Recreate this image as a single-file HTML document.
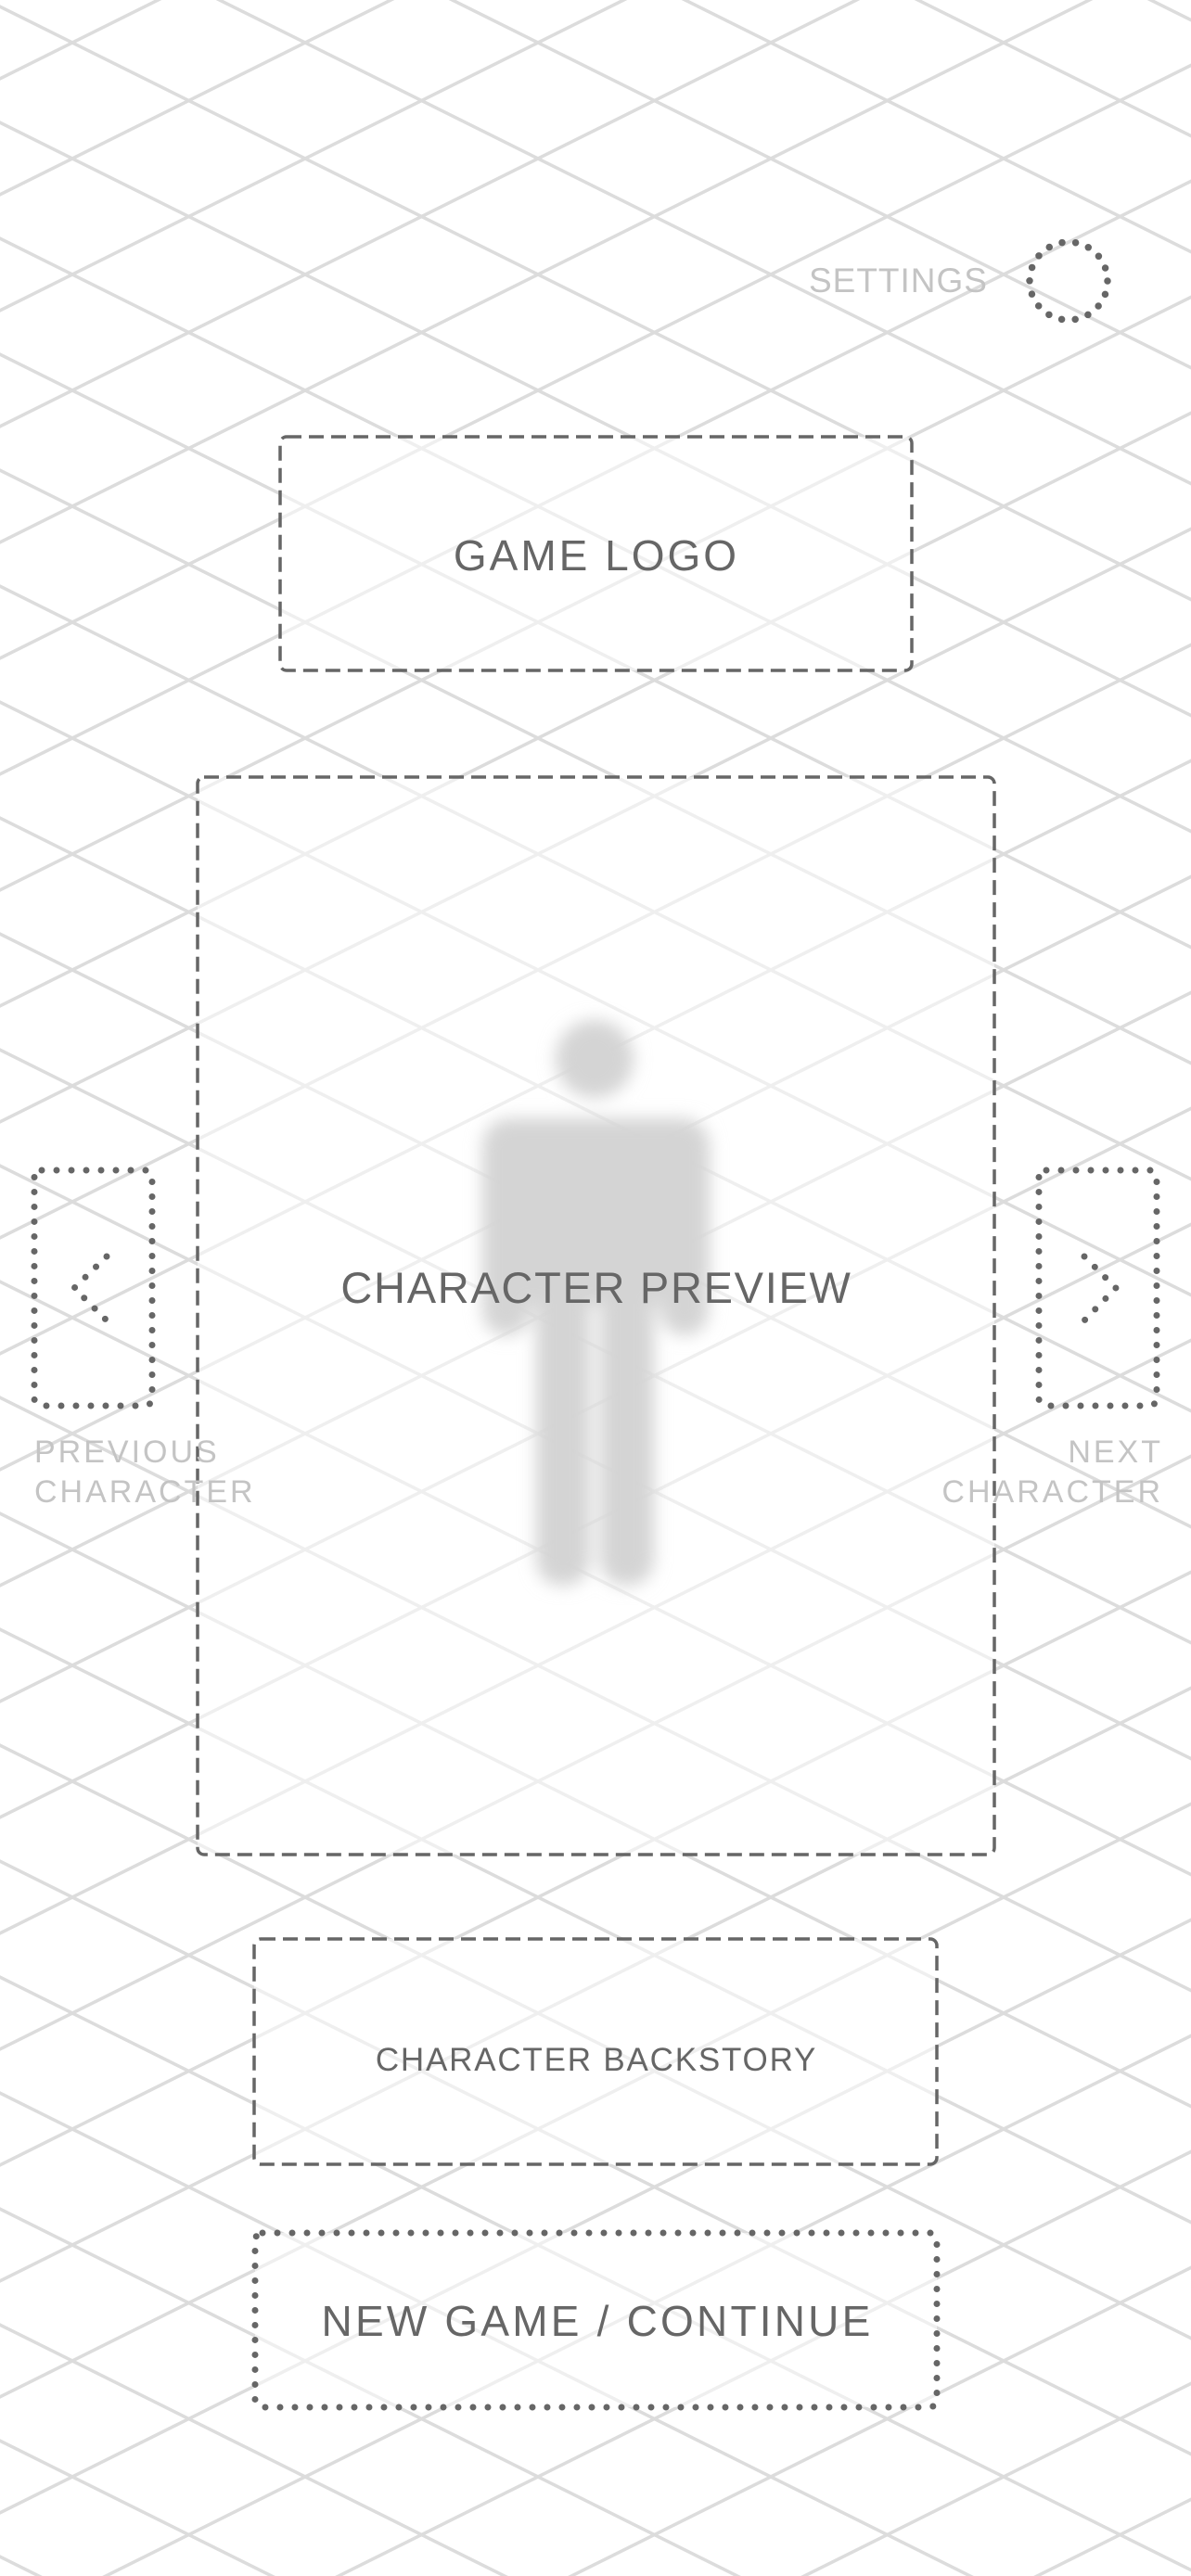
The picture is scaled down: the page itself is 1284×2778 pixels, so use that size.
<!DOCTYPE html>
<html><head><meta charset="utf-8"><style>
html,body{margin:0;padding:0;background:#fff;}
svg{display:block;}
text{font-family:"Liberation Sans",Arial,sans-serif;}
</style></head><body>
<svg width="1284" height="2778" viewBox="0 0 1284 2778" xmlns="http://www.w3.org/2000/svg">
<defs>
<pattern id="g" width="251" height="125" patternUnits="userSpaceOnUse" patternTransform="translate(78,46)">
<g stroke="#dcdcdc" stroke-width="3.5" fill="none">
<line x1="-251" y1="-125" x2="502" y2="250"/>
<line x1="-251" y1="0" x2="251" y2="250"/>
<line x1="0" y1="-125" x2="502" y2="125"/>
<line x1="-251" y1="250" x2="502" y2="-125"/>
<line x1="-251" y1="125" x2="251" y2="-125"/>
<line x1="0" y1="250" x2="502" y2="0"/>
</g>
</pattern>
<filter id="bl" x="-30%" y="-30%" width="160%" height="160%"><feGaussianBlur stdDeviation="9"/></filter>
</defs>
<rect width="1284" height="2778" fill="#fff"/>
<rect width="1284" height="2778" fill="url(#g)"/>

<text x="1065" y="315" font-size="37" fill="#c4c4c4" text-anchor="end" letter-spacing="1">SETTINGS</text>
<circle cx="1152" cy="303" r="42" fill="none" stroke="#666" stroke-width="7.5" stroke-linecap="round" stroke-dasharray="0 14.66"/>

<rect x="302" y="471" width="681" height="252" rx="7" fill="#fff" fill-opacity="0.55" stroke="#666" stroke-width="3.5" stroke-dasharray="16 8"/>
<text x="643" y="615" font-size="46" fill="#666" text-anchor="middle" letter-spacing="3">GAME LOGO</text>

<rect x="213" y="838" width="859" height="1162" rx="7" fill="#fff" fill-opacity="0.55" stroke="#666" stroke-width="3.5" stroke-dasharray="16 8"/>
<g fill="#d4d4d4" filter="url(#bl)">
<circle cx="641" cy="1142" r="42"/>
<rect x="520" y="1206" width="245" height="200" rx="30"/>
<rect x="520" y="1300" width="52" height="140" rx="26"/>
<rect x="712" y="1300" width="52" height="140" rx="26"/>
<rect x="578" y="1300" width="58" height="410" rx="28"/>
<rect x="647" y="1300" width="58" height="410" rx="28"/>
</g>
<text x="643" y="1405" font-size="47" fill="#666" text-anchor="middle" letter-spacing="1.7">CHARACTER PREVIEW</text>

<g fill="none" stroke="#666" stroke-width="7" stroke-linecap="round">
<rect x="37" y="1262" width="127" height="254" rx="8" stroke-dasharray="0 16"/>
<rect x="1120" y="1262" width="127" height="254" rx="8" stroke-dasharray="0 16"/>
<path d="M115 1355 L80 1389 L115 1424" stroke-dasharray="0 16"/>
<path d="M1169 1355 L1203 1389 L1169 1424" stroke-dasharray="0 16"/>
</g>
<text x="37" y="1577" font-size="34" fill="#c4c4c4" letter-spacing="3">PREVIOUS</text>
<text x="37" y="1620" font-size="34" fill="#c4c4c4" letter-spacing="3">CHARACTER</text>
<text x="1254" y="1577" font-size="34" fill="#c4c4c4" text-anchor="end" letter-spacing="3">NEXT</text>
<text x="1254" y="1620" font-size="34" fill="#c4c4c4" text-anchor="end" letter-spacing="3">CHARACTER</text>

<rect x="274" y="2091" width="736" height="243" rx="7" fill="#fff" fill-opacity="0.55" stroke="#666" stroke-width="3.5" stroke-dasharray="16 8"/>
<text x="643" y="2233" font-size="35" fill="#666" text-anchor="middle" letter-spacing="1.8">CHARACTER BACKSTORY</text>

<rect x="275" y="2408" width="735" height="188" rx="8" fill="#fff" fill-opacity="0.55" stroke="#666" stroke-width="7" stroke-linecap="round" stroke-dasharray="0 16"/>
<text x="644" y="2519" font-size="46" fill="#666" text-anchor="middle" letter-spacing="3.2">NEW GAME / CONTINUE</text>
</svg>
</body></html>
